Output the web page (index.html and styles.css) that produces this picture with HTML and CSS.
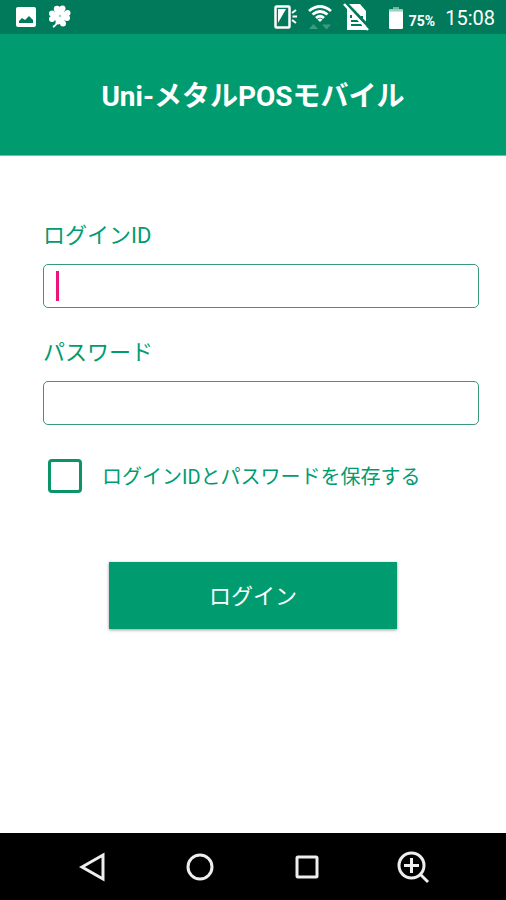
FILE: index.html
```html
<!DOCTYPE html>
<html lang="ja">
<head>
<meta charset="utf-8">
<meta name="viewport" content="width=device-width, initial-scale=1">
<title>Uni-メタルPOSモバイル</title>
<link rel="stylesheet" href="styles.css">
</head>
<body>
<div class="status-bar">
  <div class="status-left">
    <svg width="20" height="20" viewBox="0 0 20 20" aria-hidden="true">
      <rect width="20" height="20" rx="2" fill="#fff"/>
      <path d="M3 16v-2l3-3 3 2 4-4 4 4v3z" fill="#007a5a"/>
    </svg>
    <svg width="24" height="24" viewBox="0 0 24 24" aria-hidden="true">
      <g fill="#fff">
        <circle cx="9" cy="4" r="3.200"/><circle cx="14.500" cy="3.500" r="3"/>
        <circle cx="19.500" cy="8" r="3"/><circle cx="19" cy="13" r="3"/>
        <circle cx="15" cy="18.500" r="3"/><circle cx="10" cy="17" r="2.500"/>
        <circle cx="4" cy="14" r="3"/><circle cx="4" cy="8.500" r="3"/>
        <path d="M6 5l6 6 5-8zM20 6l-8 5 7 4zM17 19l-5-8-4 6zM4 16l8-5-8-5z"/>
        <circle cx="12" cy="11" r="6.500"/>
      </g>
      <path d="M11 13Q9 20 5 22" fill="none" stroke="#fff" stroke-width="2"/>
      <circle cx="12" cy="11" r="1.200" fill="#9dccbd"/>
    </svg>
  </div>
  <div class="status-right">
    <svg width="24" height="26" viewBox="0 0 24 26" aria-hidden="true">
      <rect x="1.500" y="2.500" width="14" height="21" rx="1" fill="none" stroke="#fff" stroke-width="2.500"/>
      <path d="M4 5h8L4 19z" fill="#fff"/>
      <path d="M18 9l4-3M18.500 12.500H23M18 16l4 3" stroke="#fff" stroke-width="2"/>
    </svg>
    <svg width="24" height="26" viewBox="0 0 24 26" aria-hidden="true">
      <g fill="none" stroke="#fff" stroke-width="2.800">
        <path d="M1 7Q12-2 23 7"/><path d="M4.500 10.500Q12 4.500 19.500 10.500"/><path d="M8 14Q12 10.500 16 14"/>
      </g>
      <path d="M9.500 15.500Q12 13.500 14.500 15.500L12 18z" fill="#fff"/>
      <path d="M1 25l4.500-5 4.500 5zM14 20.500h9l-4.500 5z" fill="#3d9b80"/>
    </svg>
    <svg width="28" height="28" viewBox="0 0 28 28" aria-hidden="true">
      <path d="M5 1h13l6 7v19H5z" fill="#fff"/>
      <path d="M9 12v3M9 18h8M9 22h11M20 13v2" stroke="#007a5a" stroke-width="2"/>
      <path d="M4 0l24 25" stroke="#007a5a" stroke-width="3"/>
      <path d="M2 1l24 26" stroke="#fff" stroke-width="2.500"/>
    </svg>
    <svg class="icon-battery" width="14" height="22" viewBox="0 0 14 22" aria-hidden="true">
      <path d="M4 0h6v3H4z" fill="#70b59f"/>
      <rect y="2" width="14" height="20" rx="1.500" fill="#fff"/>
      <path d="M0 4.500V3.500Q0 2 2 2h10q2 0 2 1.500v1z" fill="#9dccbd"/>
    </svg>
    <span class="battery-level">75%</span>
    <span class="clock">15:08</span>
  </div>
</div>
<header class="app-header"><h1>Uni-メタルPOSモバイル</h1></header>
<main>
  <form class="login-form">
    <div class="fields">
      <label class="field-label" for="login-id">ログインID</label>
      <div class="field">
        <input class="field-input" id="login-id" type="text">
        <span class="cursor"></span>
      </div>
      <label class="field-label" for="password">パスワード</label>
      <div class="field">
        <input class="field-input" id="password" type="password">
      </div>
      <div class="remember">
        <input class="remember-box" id="remember" type="checkbox">
        <label class="remember-label" for="remember">ログインIDとパスワードを保存する</label>
      </div>
    </div>
    <button class="login-button" type="button">ログイン</button>
  </form>
</main>
<nav class="nav-bar">
  <button class="nav-button" type="button" aria-label="戻る">
    <svg width="34" height="34" viewBox="0 0 34 34"><path d="M6 17L27 5v24z"/></svg>
  </button>
  <button class="nav-button" type="button" aria-label="ホーム">
    <svg width="34" height="34" viewBox="0 0 34 34"><circle cx="17" cy="17" r="12"/></svg>
  </button>
  <button class="nav-button" type="button" aria-label="履歴">
    <svg width="34" height="34" viewBox="0 0 34 34"><rect x="8" y="7" width="20" height="20" rx="1"/></svg>
  </button>
  <button class="nav-button" type="button" aria-label="拡大">
    <svg width="34" height="34" viewBox="0 0 34 34"><circle cx="15.500" cy="15.500" r="12.500"/><path d="M24 24l8 8M15.500 8v15M8 15.500h15"/></svg>
  </button>
</nav>
</body>
</html>
```
FILE: styles.css
```css
* {
  box-sizing: border-box;
}

body {
  margin: 0;
  min-height: 100vh;
  display: flex;
  flex-direction: column;
  background: #fff;
  color: #009c70;
  font-family: Roboto, "Noto Sans CJK JP", sans-serif;
}

.status-bar {
  height: 34px;
  padding: 0 11px 0 16px;
  display: flex;
  justify-content: space-between;
  align-items: center;
  background: #007a5a;
  color: #fff;
}

.status-left,
.status-right {
  display: flex;
  align-items: center;
}

.status-left {
  gap: 12px;
}

.status-right {
  gap: 10px;
}

.icon-battery {
  margin: 2px 2px 0 9px;
}

.battery-level {
  margin: 8px 0 0 -6px;
  font-size: 14px;
  font-weight: 700;
  line-height: 20px;
}

.clock {
  margin-top: 2px;
  font-size: 20px;
  line-height: 24px;
}

.app-header {
  padding: 43px 16px 38px;
  background: #009c70;
  border-bottom: 1px solid #6fbfa5;
  color: #fff;
  text-align: center;
}

.app-header h1 {
  margin: 0;
  font-size: 28px;
  font-weight: 700;
  line-height: 40px;
}

main {
  flex: 1;
}

.login-form {
  padding: 64px 0 40px;
  display: flex;
  flex-direction: column;
}

.fields {
  padding: 0 27px 0 43px;
}

.field-label {
  display: block;
  font-size: 22px;
  line-height: 32px;
}

.field {
  position: relative;
  margin: 12px 0 29px;
  display: flex;
}

.field-input {
  width: 100%;
  height: 44px;
  padding: 0 14px;
  border: 1px solid #36997b;
  border-radius: 5px;
  outline: none;
  background: #fff;
  color: #009c70;
  font: inherit;
  font-size: 22px;
}

.cursor {
  position: absolute;
  top: 7px;
  left: 13px;
  width: 3px;
  height: 30px;
  background: #ec1478;
}

.remember {
  padding: 5px 0 0 5px;
  display: flex;
  align-items: center;
  gap: 20px;
}

.remember-label {
  padding-top: 2px;
  font-size: 20px;
  line-height: 32px;
}

.remember-box {
  appearance: none;
  width: 34px;
  height: 34px;
  margin: 0;
  border: 3px solid #0b9468;
  border-radius: 4px;
}

.remember-box:checked {
  background: #0b9468;
}

.login-button {
  align-self: center;
  width: 57%;
  height: 67px;
  margin: 69px 0 0;
  padding: 0 0 4px;
  border: 0;
  background: #009c70;
  box-shadow: 0 1px 3px rgba(0, 0, 0, 0.4);
  color: #fff;
  font: inherit;
  font-size: 22px;
}

.nav-bar {
  height: 67px;
  padding: 0 40px;
  display: flex;
  background: #000;
}

.nav-button {
  flex: 1;
  padding: 0;
  display: flex;
  align-items: center;
  justify-content: center;
  border: 0;
  background: none;
}

.nav-button svg {
  fill: none;
  stroke: #eee;
  stroke-width: 3;
}
```
